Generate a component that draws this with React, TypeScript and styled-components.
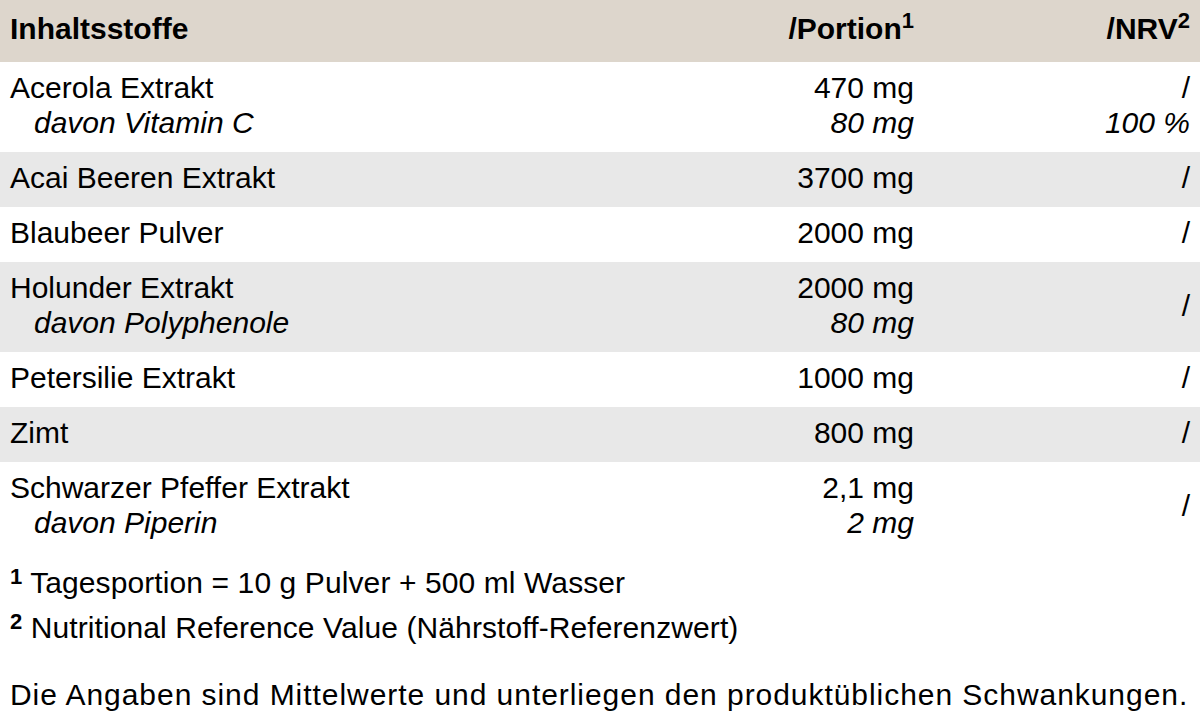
import { createGlobalStyle, styled } from 'styled-components';

type Line = { text: string; italic?: boolean };

type Item = {
    name: string;
    sub?: string;
    portion: Line[];
    nrv: Line[];
};

const items: Item[] = [
    {
        name: 'Acerola Extrakt',
        sub: 'davon Vitamin C',
        portion: [{ text: '470 mg' }, { text: '80 mg', italic: true }],
        nrv: [{ text: '/' }, { text: '100 %', italic: true }],
    },
    { name: 'Acai Beeren Extrakt', portion: [{ text: '3700 mg' }], nrv: [{ text: '/' }] },
    { name: 'Blaubeer Pulver', portion: [{ text: '2000 mg' }], nrv: [{ text: '/' }] },
    {
        name: 'Holunder Extrakt',
        sub: 'davon Polyphenole',
        portion: [{ text: '2000 mg' }, { text: '80 mg', italic: true }],
        nrv: [{ text: '/' }],
    },
    { name: 'Petersilie Extrakt', portion: [{ text: '1000 mg' }], nrv: [{ text: '/' }] },
    { name: 'Zimt', portion: [{ text: '800 mg' }], nrv: [{ text: '/' }] },
    {
        name: 'Schwarzer Pfeffer Extrakt',
        sub: 'davon Piperin',
        portion: [{ text: '2,1 mg' }, { text: '2 mg', italic: true }],
        nrv: [{ text: '/' }],
    },
];

export default function App() {
    return (
        <>
            <GlobalStyle />
            <Page>
                <Table>
                    <HeadRow>
                        <Cell>
                            <Text>Inhaltsstoffe</Text>
                        </Cell>
                        <Cell $right>
                            <Text>
                                /Portion<Sup>1</Sup>
                            </Text>
                        </Cell>
                        <Cell $right $last>
                            <Text>
                                /NRV<Sup>2</Sup>
                            </Text>
                        </Cell>
                    </HeadRow>

                    {items.map((item, i) => (
                        <Row key={item.name} $shaded={i % 2 === 1}>
                            <Cell>
                                <Text>{item.name}</Text>
                                {item.sub && <Sub>{item.sub}</Sub>}
                            </Cell>
                            <Cell $right>
                                {item.portion.map((p, j) => (
                                    <Text key={j} $italic={p.italic}>
                                        {p.text}
                                    </Text>
                                ))}
                            </Cell>
                            <Cell $right $last>
                                {item.nrv.map((n, j) => (
                                    <Text key={j} $italic={n.italic}>
                                        {n.text}
                                    </Text>
                                ))}
                            </Cell>
                        </Row>
                    ))}
                </Table>

                <Notes>
                    <Note>
                        <NoteMark>1</NoteMark> Tagesportion = 10 g Pulver + 500 ml Wasser
                    </Note>
                    <Note>
                        <NoteMark>2</NoteMark> Nutritional Reference Value (Nährstoff-Referenzwert)
                    </Note>
                </Notes>

                <Remark>Die Angaben sind Mittelwerte und unterliegen den produktüblichen Schwankungen.</Remark>
            </Page>
        </>
    );
}

const GlobalStyle = createGlobalStyle`
    * {
        box-sizing: border-box;
    }
    body {
        margin: 0;
        background: #ffffff;
        color: #000000;
        font-family: "Liberation Sans", Arial, sans-serif;
        font-size: 30px;
    }
`;

const Page = styled.div`
    width: 1200px;
`;

const Table = styled.div`
    display: flex;
    flex-direction: column;
`;

const Row = styled.div<{ $shaded?: boolean }>`
    display: grid;
    grid-template-columns: 1fr 300px 286px;
    background: ${(p) => (p.$shaded ? '#e8e8e8' : '#ffffff')};
`;

const HeadRow = styled(Row)`
    background: #ddd6cc;
    font-weight: 700;

    & > div {
        padding-top: 11px;
        padding-bottom: 16px;
    }
`;

const Cell = styled.div<{ $right?: boolean; $last?: boolean }>`
    display: flex;
    flex-direction: column;
    justify-content: center;
    align-items: ${(p) => (p.$right ? 'flex-end' : 'flex-start')};
    padding: 8px ${(p) => (p.$last ? '10px' : '0')} 12px ${(p) => (p.$right ? '0' : '10px')};
    line-height: 35px;
    white-space: nowrap;
`;

const Text = styled.div<{ $italic?: boolean }>`
    font-style: ${(p) => (p.$italic ? 'italic' : 'normal')};
`;

const Sub = styled.div`
    font-style: italic;
    padding-left: 24px;
`;

const Sup = styled.span`
    font-size: 22px;
    line-height: 0;
    vertical-align: 11px;
`;

const Notes = styled.div`
    margin-top: 8px;
    padding-left: 10px;
    line-height: 45px;
    letter-spacing: 0.1px;
`;

const Note = styled.div``;

const NoteMark = styled.span`
    font-size: 22px;
    font-weight: 700;
    line-height: 0;
    vertical-align: 9px;
    letter-spacing: 0;
`;

const Remark = styled.div`
    margin-top: 22px;
    padding-left: 10px;
    line-height: 45px;
    letter-spacing: 0.95px;
    white-space: nowrap;
`;
